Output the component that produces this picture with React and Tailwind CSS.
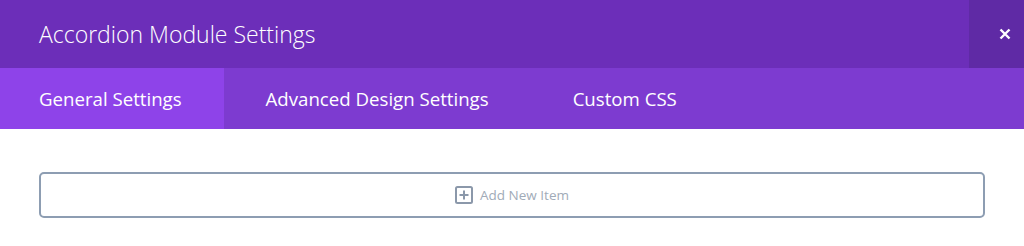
import React from 'react';

const tabs = ['General Settings', 'Advanced Design Settings', 'Custom CSS'];

const App = () => {
  return (
    <div className="w-[1024px] h-[246px] bg-white font-['Open_Sans',sans-serif] overflow-hidden">
      <div className="flex h-[68px] bg-[#6c2eb9]">
        <h1 className="flex-1 flex items-center pl-[39px] text-[23px] font-light text-white">
          Accordion Module Settings
        </h1>
        <button className="w-[55px] flex items-center pl-[30px] bg-[#5f2aa5] text-white">
          <svg width="12" height="12" viewBox="0 0 12 12" fill="none" stroke="currentColor" strokeWidth="2.4">
            <path d="M1.5 1.5l9 9M10.5 1.5l-9 9" />
          </svg>
        </button>
      </div>

      <div className="flex h-[61px] bg-[#7d3bd0]">
        {tabs.map((tab, i) => (
          <div
            key={tab}
            className={`flex items-center pr-[42px] text-[18.65px] text-white ${i === 0 ? 'bg-[#8e43e9] pl-[39px]' : 'pl-[42px]'}`}
          >
            {tab}
          </div>
        ))}
      </div>

      <div className="px-[39px] pt-[43px]">
        <button className="w-full h-[46px] flex items-center justify-center gap-[7px] border-2 border-[#8d9db2] rounded-[5px] text-[13.5px] text-[#a1abb8]">
          <svg width="18" height="18" viewBox="0 0 18 18" fill="none" stroke="#8b98aa" strokeWidth="2">
            <rect x="1" y="1" width="16" height="16" rx="1.5" />
            <path d="M9 4.5v9M4.5 9h9" />
          </svg>
          Add New Item
        </button>
      </div>
    </div>
  );
};

export default App;
